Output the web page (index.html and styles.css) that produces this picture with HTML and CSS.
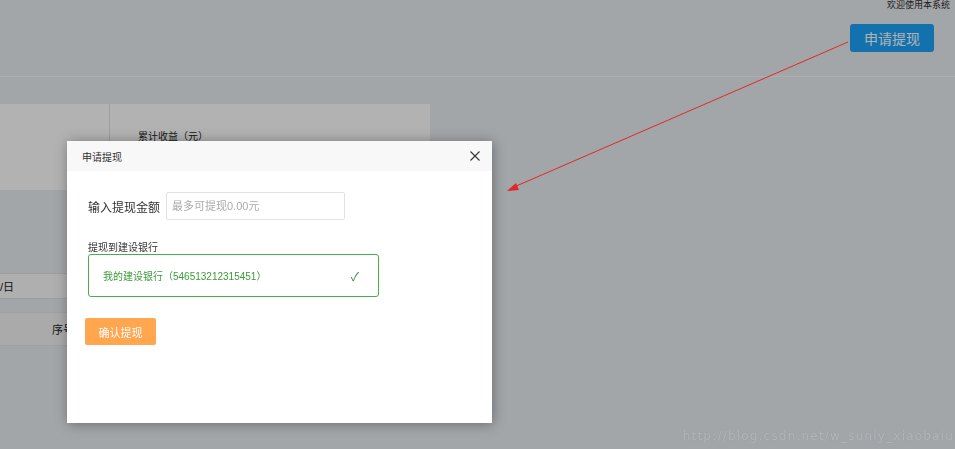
FILE: index.html
```html
<!DOCTYPE html>
<html lang="zh-CN">
<head>
<meta charset="utf-8">
<title>申请提现</title>
<link rel="stylesheet" href="styles.css">
</head>
<body>
<div class="page">
  <header class="topbar">
    <div class="welcome">欢迎使用本系统</div>
    <button class="btn-apply">申请提现</button>
  </header>
  <section class="stats">
    <div class="stat-cell stat-first"></div>
    <div class="stat-cell stat-second">累计收益（元）</div>
  </section>
  <section class="table">
    <div class="row row-date"><span>/日</span></div>
    <div class="row row-head"><span class="col-no">序号</span></div>
  </section>
</div>

<div class="mask"></div>

<div class="modal">
  <div class="modal-header">
    <span class="modal-title">申请提现</span>
    <svg class="modal-close" width="10" height="10" viewBox="0 0 10 10" aria-label="关闭">
      <path d="M0.5 0.5 L9.5 9.5 M9.5 0.5 L0.5 9.5" stroke="#333" stroke-width="1.1" fill="none"/>
    </svg>
  </div>
  <div class="modal-body">
    <div class="field">
      <label class="field-label">输入提现金额</label>
      <input class="field-input" type="text" placeholder="最多可提现0.00元">
    </div>
    <div class="bank-label">提现到建设银行</div>
    <div class="bank-option">
      <span class="bank-name">我的建设银行（546513212315451）</span>
      <span class="bank-check">✓</span>
    </div>
    <button class="btn-confirm">确认提现</button>
  </div>
</div>

<svg class="annotation" width="955" height="449" viewBox="0 0 955 449">
  <line x1="848" y1="42" x2="514" y2="187" stroke="#e2272a" stroke-width="1"/>
  <polygon points="507,191 516,183 519,190" fill="#e2272a"/>
</svg>

<div class="watermark">http://blog.csdn.net/w_sunly_xiaobaiu</div>
</body>
</html>
```

FILE: styles.css
```css
* { box-sizing: border-box; }
html, body { margin: 0; padding: 0; }
body {
  width: 955px;
  height: 449px;
  overflow: hidden;
  background: #eaeef2;
  font-family: "Liberation Sans", "Noto Sans CJK SC", sans-serif;
  color: #333;
}
.page { width: 955px; }
.topbar {
  height: 77px;
  border-bottom: 1px solid #f6f8fa;
  display: flex;
  flex-direction: column;
  align-items: flex-end;
  padding-right: 21px;
}
.welcome {
  font-size: 9px;
  line-height: 10px;
  margin-top: 0;
  margin-right: -16px;
  color: #2a2a2a;
}
.btn-apply {
  margin-top: 14px;
  width: 84px;
  height: 28px;
  border: none;
  border-radius: 3px;
  background: #1ca4fa;
  color: #fff;
  font-family: inherit;
  font-size: 14px;
  padding: 0;
}
.stats {
  margin-top: 27px;
  width: 430px;
  height: 86px;
  background: #fff;
  display: flex;
}
.stat-cell { height: 100%; }
.stat-first { width: 110px; border-right: 1px solid #e4e4e4; }
.stat-second {
  flex: 1;
  padding: 24px 0 0 28px;
  font-size: 10px;
  color: #222;
}
.table { margin-top: 83px; width: 480px; }
.row { display: flex; align-items: center; font-size: 11px; color: #222; }
.row-date {
  height: 26px;
  background: #fbfbfb;
  border-top: 1px solid #e2e2e2;
  border-bottom: 1px solid #e2e2e2;
}
.row-head {
  margin-top: 13px;
  height: 34px;
  background: #f4f4f4;
  border-top: 1px solid #e6e6e6;
  border-bottom: 1px solid #e6e6e6;
  padding-left: 52px;
}
.mask {
  position: fixed;
  inset: 0;
  background: rgba(0, 0, 0, 0.3);
}
.modal {
  position: absolute;
  left: 67px;
  top: 141px;
  width: 425px;
  height: 282px;
  background: #fff;
  box-shadow: 1px 1px 12px rgba(0, 0, 0, 0.35);
}
.modal-header {
  height: 30px;
  background: #f8f8f8;
  display: flex;
  align-items: center;
  justify-content: space-between;
  padding: 0 12px 0 15px;
}
.modal-title { font-size: 10px; color: #333; }
.modal-close { display: block; }
.modal-body { padding: 21px 0 0 21px; }
.field { display: flex; align-items: center; }
.field-label { font-size: 12px; color: #333; width: 78px; }
.field-input {
  width: 179px;
  height: 28px;
  border: 1px solid #e2e2e2;
  border-radius: 2px;
  padding: 0 0 0 5px;
  font-family: inherit;
  font-size: 11px;
}
.field-input::placeholder { color: #aaa; }
.bank-label {
  margin-top: 21px;
  font-size: 10px;
  line-height: 13px;
  color: #333;
}
.bank-option {
  width: 291px;
  height: 43px;
  border: 1px solid #49ae49;
  border-radius: 3px;
  display: flex;
  align-items: center;
  justify-content: space-between;
  padding: 0 19px 0 14px;
}
.bank-name { font-size: 10px; color: #3a9b3a; }
.bank-check { font-size: 12px; color: #3f8a3f; }
.btn-confirm {
  margin-top: 21px;
  margin-left: -3px;
  width: 71px;
  height: 27px;
  border: none;
  border-radius: 2px;
  background: #ffa64f;
  color: #fff;
  font-family: inherit;
  font-size: 11px;
  padding: 0;
}
.annotation {
  position: absolute;
  left: 0;
  top: 0;
  pointer-events: none;
}
.watermark {
  position: absolute;
  right: 1px;
  top: 429px;
  font-family: "DejaVu Sans", sans-serif;
  font-size: 12px;
  letter-spacing: 1.2px;
  color: #b3b6b9;
  text-shadow: 0 0 1px #8f9296;
}
```
